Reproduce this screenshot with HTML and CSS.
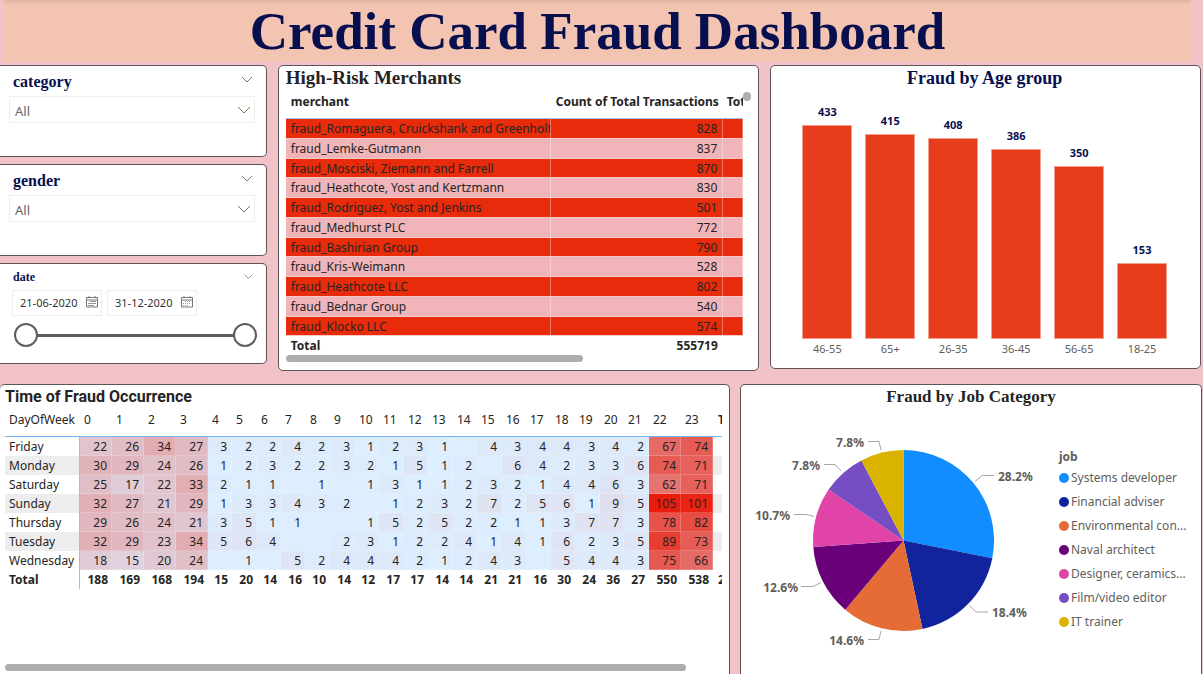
FILE: index.html
```html
<!DOCTYPE html>
<html lang="en">
<head>
<meta charset="utf-8">
<meta name="viewport" content="width=device-width, initial-scale=1">
<title>Credit Card Fraud Dashboard</title>
<link rel="stylesheet" href="styles.css">
</head>
<body>
<header class="banner"><h1>Credit Card Fraud Dashboard</h1></header>
<main class="report">
  <div class="row row-top">
    <div class="slicers">
      <section class="card slicer">
        <div class="slicer-head">
          <label for="category">category</label>
          <button type="button" class="icon-btn" aria-label="Collapse category"><svg class="chev chev-warm" viewBox="0 0 12 8"><path d="M1 1l5 5 5-5"/></svg></button>
        </div>
        <div class="dropdown">
          <select id="category"><option>All</option></select>
          <svg class="dropdown-arrow chev-warm" viewBox="0 0 14 9"><path d="M1 1l6 6 6-6"/></svg>
        </div>
      </section>
      <section class="card slicer">
        <div class="slicer-head">
          <label for="gender">gender</label>
          <button type="button" class="icon-btn" aria-label="Collapse gender"><svg class="chev" viewBox="0 0 12 8"><path d="M1 1l5 5 5-5"/></svg></button>
        </div>
        <div class="dropdown">
          <select id="gender"><option>All</option></select>
          <svg class="dropdown-arrow" viewBox="0 0 14 9"><path d="M1 1l6 6 6-6"/></svg>
        </div>
      </section>
      <section class="card slicer slicer-date">
        <div class="slicer-head">
          <h2>date</h2>
          <button type="button" class="icon-btn" aria-label="Collapse date"><svg class="chev chev-small" viewBox="0 0 12 8"><path d="M1 1l5 5 5-5"/></svg></button>
        </div>
        <div class="dates">
          <div class="date-box">
            <input type="text" aria-label="Start date" value="21-06-2020">
            <svg class="calendar" viewBox="0 0 12 12"><path class="cal-frame" d="M.5 1.500h11v9.500H.5zM.5 4h11M3 0v2M9 0v2"/><path class="cal-days" d="M4 5.500h6M2 7.500h8M2 9.500h6"/></svg>
          </div>
          <div class="date-box">
            <input type="text" aria-label="End date" value="31-12-2020">
            <svg class="calendar" viewBox="0 0 12 12"><path class="cal-frame" d="M.5 1.500h11v9.500H.5zM.5 4h11M3 0v2M9 0v2"/><path class="cal-days" stroke-dasharray="1 1" d="M4 5.500h6M2 7.500h8M2 9.500h6"/></svg>
          </div>
        </div>
        <div class="range">
          <input type="range" aria-label="Range start" min="0" max="100" value="0">
          <input type="range" aria-label="Range end" min="0" max="100" value="100">
        </div>
      </section>
    </div>

    <section class="card merchants">
      <h2>High-Risk Merchants</h2>
      <div class="merchant-scroll">
        <table class="merchant-table">
          <colgroup><col class="m-name"><col class="m-count"><col></colgroup>
          <thead><tr><th scope="col">merchant</th><th scope="col" class="num">Count of Total Transactions</th><th scope="col" class="cut">Total</th></tr></thead>
          <tbody>
            <tr><td>fraud_Romaguera, Cruickshank and Greenholt</td><td class="num">828</td><td></td></tr>
            <tr><td>fraud_Lemke-Gutmann</td><td class="num">837</td><td></td></tr>
            <tr><td>fraud_Mosciski, Ziemann and Farrell</td><td class="num">870</td><td></td></tr>
            <tr><td>fraud_Heathcote, Yost and Kertzmann</td><td class="num">830</td><td></td></tr>
            <tr><td>fraud_Rodriguez, Yost and Jenkins</td><td class="num">501</td><td></td></tr>
            <tr><td>fraud_Medhurst PLC</td><td class="num">772</td><td></td></tr>
            <tr><td>fraud_Bashirian Group</td><td class="num">790</td><td></td></tr>
            <tr><td>fraud_Kris-Weimann</td><td class="num">528</td><td></td></tr>
            <tr><td>fraud_Heathcote LLC</td><td class="num">802</td><td></td></tr>
            <tr><td>fraud_Bednar Group</td><td class="num">540</td><td></td></tr>
            <tr><td>fraud_Klocko LLC</td><td class="num">574</td><td></td></tr>
          </tbody>
          <tfoot><tr><th scope="row">Total</th><td class="num">555719</td><td></td></tr></tfoot>
        </table>
        <span class="scroll-dot"></span>
      </div>
      <div class="hbar hbar-merchants"></div>
    </section>

    <section class="card age">
      <h2>Fraud by Age group</h2>
      <div class="bars">
        <div class="bar-col"><span class="bar-value">433</span><div class="bar" style="height:214px"></div><span class="bar-label">46-55</span></div>
        <div class="bar-col"><span class="bar-value">415</span><div class="bar" style="height:205px"></div><span class="bar-label">65+</span></div>
        <div class="bar-col"><span class="bar-value">408</span><div class="bar" style="height:201px"></div><span class="bar-label">26-35</span></div>
        <div class="bar-col"><span class="bar-value">386</span><div class="bar" style="height:190px"></div><span class="bar-label">36-45</span></div>
        <div class="bar-col"><span class="bar-value">350</span><div class="bar" style="height:173px"></div><span class="bar-label">56-65</span></div>
        <div class="bar-col"><span class="bar-value">153</span><div class="bar" style="height:76px"></div><span class="bar-label">18-25</span></div>
      </div>
    </section>
  </div>

  <div class="row row-bottom">
    <section class="card times">
      <h2>Time of Fraud Occurrence</h2>
      <table class="heat">
        <colgroup id="heat-cols"></colgroup>
        <thead><tr id="heat-head"></tr></thead>
        <tbody id="heat-body"></tbody>
        <tfoot><tr id="heat-foot"></tr></tfoot>
      </table>
      <div class="hbar hbar-times"></div>
    </section>

    <section class="card jobs">
      <h2>Fraud by Job Category</h2>
      <div class="jobs-body">
        <svg class="pie" viewBox="1 25 310 266" role="img" aria-label="Share of fraud by job">
          <path fill="#118dff" d="M163.500 156.500V66A90.500 90.500 0 0 1 252.300 174.200z"/>
          <path fill="#12239e" d="M163.500 156.500L252.300 174.200A90.500 90.500 0 0 1 182.500 245z"/>
          <path fill="#e66c37" d="M163.500 156.500L182.500 245A90.500 90.500 0 0 1 105.200 225.700z"/>
          <path fill="#6b007b" d="M163.500 156.500L105.200 225.700A90.500 90.500 0 0 1 73.300 162.900z"/>
          <path fill="#e044a7" d="M163.500 156.500L73.300 162.900A90.500 90.500 0 0 1 88.600 105.600z"/>
          <path fill="#744ec2" d="M163.500 156.500L88.600 105.600A90.500 90.500 0 0 1 121.400 76.400z"/>
          <path fill="#d9b300" d="M163.500 156.500L121.400 76.400A90.500 90.500 0 0 1 163.500 66z"/>
          <path class="leader" d="M235 97.500l7-6h12M229 221l7 7h12M141 247l-2 8.500h-11M81 198.500l-8 4H61M74 132.500l-8-2H54M101 87l-6-6.500H84M141 66l-2-8.500h-11"/>
          <g class="pie-text">
            <text x="258" y="97">28.2%</text>
            <text x="252" y="233">18.4%</text>
            <text x="124" y="261" text-anchor="end">14.6%</text>
            <text x="58" y="208" text-anchor="end">12.6%</text>
            <text x="50" y="136" text-anchor="end">10.7%</text>
            <text x="80" y="86" text-anchor="end">7.8%</text>
            <text x="124" y="63" text-anchor="end">7.8%</text>
          </g>
        </svg>
        <div class="legend">
          <h3>job</h3>
          <ul>
            <li class="c1">Systems developer</li>
            <li class="c2">Financial adviser</li>
            <li class="c3">Environmental con...</li>
            <li class="c4">Naval architect</li>
            <li class="c5">Designer, ceramics...</li>
            <li class="c6">Film/video editor</li>
            <li class="c7">IT trainer</li>
          </ul>
        </div>
      </div>
    </section>
  </div>
</main>
<script src="heat.js"></script>
</body>
</html>
```
FILE: styles.css
```css
* { box-sizing: border-box; }

body {
  margin: 0;
  height: 100vh;
  display: flex;
  flex-direction: column;
  overflow: hidden;
  background: #f1c2c7;
  color: #252423;
  font-family: "Noto Sans", "Open Sans", sans-serif;
  font-size: 12px;
  line-height: 16px;
}

h1, h2, h3, ul { margin: 0; padding: 0; }

.banner {
  margin: 0 12px 0 4px;
  background: linear-gradient(#dfb3a3, #f3c4b2 5px);
  text-align: center;
}

.banner h1 {
  color: #070f4f;
  font: bold 53px/62px "Liberation Serif", serif;
}

.report {
  flex: 1;
  display: flex;
  flex-direction: column;
  gap: 13px;
  padding-top: 3px;
}

.row { display: grid; column-gap: 11px; }

.row-top {
  grid-template-columns: 267fr 482fr 431fr;
  align-items: start;
  padding-right: 2px;
}

.row-bottom {
  flex: 1;
  grid-template-columns: 730fr 462fr;
  column-gap: 10px;
  padding-right: 1px;
}

.card {
  min-width: 0;
  background: #fff;
  border: 1px solid #5e5355;
  border-radius: 5px;
}

.card h2 { font: bold 18px/24px "Liberation Serif", serif; }

/* Slicers */
.slicers { display: grid; gap: 7px; }

.slicer {
  min-height: 92px;
  padding: 6px 11px 0 9px;
  border-left: 0;
  border-radius: 0 5px 5px 0;
}

.slicer-head {
  display: flex;
  justify-content: space-between;
  padding: 0 0 0 4px;
}

.slicer-head label {
  color: #070f4f;
  font: bold 16px/20px "Liberation Serif", serif;
}

.slicer-head h2 {
  color: #070f4f;
  font: bold 12px/14px "Liberation Serif", serif;
}

.icon-btn {
  display: flex;
  padding: 4px 2px;
  border: 0;
  background: none;
}

svg { fill: none; stroke: #777; }
.chev { width: 12px; height: 8px; }
.chev-small { width: 9px; height: 6px; }
.chev-warm { stroke: #8a7250; }

.dropdown { position: relative; margin-top: 4px; }

.dropdown select {
  display: block;
  width: 100%;
  height: 27px;
  padding: 2px 5px 0;
  border: 1px solid #eee;
  border-radius: 0;
  background: #fff;
  color: #666;
  appearance: none;
  font: 13px/18px "Noto Sans", sans-serif;
}

.dropdown-arrow {
  position: absolute;
  top: 10px;
  right: 4px;
  width: 14px;
  height: 9px;
  pointer-events: none;
}

.slicer-date { min-height: 101px; }
.dates { display: flex; gap: 5px; padding: 6px 0 0 3px; }

.date-box {
  display: flex;
  align-items: center;
  width: 90px;
  height: 26px;
  padding: 0 3px 0 7px;
  border: 1px solid #eee;
}

.date-box input {
  flex: 1;
  min-width: 0;
  padding: 0;
  border: 0;
  background: none;
  color: #333;
  font: 11px/16px "Noto Sans", sans-serif;
}

.calendar { width: 12px; height: 12px; margin-bottom: 3px; }
.cal-frame { stroke: #777; }
.cal-days { stroke: #999; }

.range { display: grid; margin: 7px -2px 0 5px; }

.range input {
  grid-area: 1 / 1;
  width: 100%;
  height: 24px;
  margin: 0;
  background: none;
  appearance: none;
  pointer-events: none;
}

.range input:first-child::-webkit-slider-runnable-track {
  background: linear-gradient(#605e5c, #605e5c) center / 100% 3px no-repeat;
}

.range input::-webkit-slider-thumb {
  width: 24px;
  height: 24px;
  border: 2px solid #605e5c;
  border-radius: 50%;
  background: #fff;
  appearance: none;
  pointer-events: auto;
}

/* Merchant table */
.merchants { padding: 0 15px 8px 7px; }
.merchants h2 { font-size: 19px; }

.merchant-scroll { position: relative; }

table { width: 100%; border-collapse: collapse; table-layout: fixed; }
th, td { padding: 0 5px; overflow: hidden; white-space: nowrap; }
th { text-align: left; }
.num { text-align: right; }

.m-name { width: 265px; }
.m-count { width: 172px; }
.merchant-table thead th { height: 28px; padding-bottom: 4px; border-bottom: 1px solid #9cc4ea; }
.merchant-table thead .cut { padding: 0 0 4px 4px; }
.merchant-table tbody { border-bottom: 1px solid #9cc4ea; }
.merchant-table tbody td {
  height: 20px;
  padding-top: 1px;
  border-right: 1px solid #ec7a63;
  border-bottom: 1px solid #f3c9c8;
  background: #e82c0b;
  line-height: 17px;
}
.merchant-table tbody td:first-child { padding-right: 0; }
.merchant-table tbody tr:nth-child(4n+3) td { height: 19px; }
.merchant-table tbody tr:nth-child(even) td { border-right-color: #f6cdcf; background: #f0b4b9; }
.merchant-table tfoot { font-weight: bold; }
.merchant-table tfoot th, .merchant-table tfoot td { padding-top: 2px; }

.scroll-dot {
  position: absolute;
  top: 2px;
  right: -8px;
  width: 8px;
  height: 9px;
  border-radius: 4px;
  background: #adadad;
}

.hbar { height: 7px; border-radius: 4px; background: #adadad; }
.hbar-merchants { width: 65%; margin-top: 1px; }

/* Age chart */
.age { padding: 0 33px 11px 31px; text-align: center; }
.age h2 { color: #070f4f; }

.bars { display: flex; align-items: flex-end; gap: 13px; min-height: 267px; }
.bar-col { flex: 1; display: flex; flex-direction: column; }
.bar-value { color: #070f4f; font-size: 11px; font-weight: bold; margin-bottom: 5px; }
.bar { border: 1px solid #f3a08f; background: #e83d1c; }
.bar-label { margin-top: 2px; color: #605e5c; font-size: 11px; }

/* Heat map */
.times {
  display: flex;
  flex-direction: column;
  padding: 0 7px 4px 5px;
  border-left: 0;
  border-bottom: 0;
  border-radius: 5px 5px 0 0;
}

.times h2 { font: bold 16px/24px Roboto, sans-serif; }

.heat { border-collapse: separate; border-spacing: 0; }
.w-day { width: 75px; }
.w-wide { width: 32px; }
.w-a { width: 24px; }
.w-b { width: 25px; }

.heat thead th { height: 28px; padding: 0 0 4px 4px; border-bottom: 1px solid #72b5f5; font-weight: normal; }
.heat td, .heat tfoot th { height: 19px; padding: 0 4px 0 0; line-height: 17px; text-align: right; }
.heat tbody th { padding: 0 0 0 4px; border-right: 1px solid #8fc3f3; font-weight: normal; }
.heat tbody td, .heat tbody th { padding-top: 1px; }
.heat tbody td { border-right: 1px solid rgba(255, 255, 255, .2); border-bottom: 1px solid rgba(255, 255, 255, .2); }
.heat tbody tr:nth-child(even) { background: #ededed; }
.heat tfoot th { padding-left: 4px; border-right: 1px solid #8fc3f3; text-align: left; }
.heat tfoot td { font-weight: bold; }
.heat tfoot td, .heat tfoot th { overflow: visible; }
.heat tr > .edge { padding: 0 0 0 5px; border: 0; overflow: hidden; text-align: left; font-weight: bold; }
.heat thead tr > .edge { padding-bottom: 4px; border-bottom: 1px solid #72b5f5; }

.hbar-times { width: 95%; margin-top: auto; }

/* Job chart */
.jobs { border-bottom: 0; border-radius: 5px 5px 0 0; }
.jobs h2 { font-size: 17px; text-align: center; }
.jobs-body { display: flex; }
.pie { flex: none; width: 310px; height: 266px; stroke: none; }
.leader { stroke: #a6a6a6; }
.pie-text { fill: #605e5c; font-size: 12px; font-weight: bold; }

.legend { padding: 39px 0 0 8px; color: #605e5c; white-space: nowrap; }
.legend h3 { font-size: 12px; line-height: 18px; }
.legend ul { list-style: none; }
.legend li { display: flex; align-items: center; gap: 2px; height: 24px; }
.legend li::before { content: ""; width: 10px; height: 10px; border-radius: 50%; background: var(--dot); }
.c1 { --dot: #118dff; }
.c2 { --dot: #12239e; }
.c3 { --dot: #e66c37; }
.c4 { --dot: #6b007b; }
.c5 { --dot: #e044a7; }
.c6 { --dot: #744ec2; }
.c7 { --dot: #d9b300; }
```
FILE: heat.js
```js
// Fraud counts per weekday, one entry per hour (0-23); 0 is drawn as blank.
const days = {
  Friday:    [22,26,34,27,3,2,2,4,2,3,1,2,3,1,0,4,3,4,4,3,4,2,67,74],
  Monday:    [30,29,24,26,1,2,3,2,2,3,2,1,5,1,2,0,6,4,2,3,3,6,74,71],
  Saturday:  [25,17,22,33,2,1,1,0,1,0,1,3,1,1,2,3,2,1,4,4,6,3,62,71],
  Sunday:    [32,27,21,29,1,3,3,4,3,2,0,1,2,3,2,7,2,5,6,1,9,5,105,101],
  Thursday:  [29,26,24,21,3,5,1,1,0,0,1,5,2,5,2,2,1,1,3,7,7,3,78,82],
  Tuesday:   [32,29,23,34,5,6,4,0,0,2,3,1,2,2,4,1,4,1,6,2,3,5,89,73],
  Wednesday: [18,15,20,24,0,1,0,5,2,4,4,4,2,1,2,4,3,0,5,4,4,3,75,66]
};
const totals = [188,169,168,194,15,20,14,16,10,14,12,17,17,14,14,21,21,16,30,24,36,27,550,538];
const low = [221, 238, 255];
const high = [234, 29, 12];

const shade = v => {
  const t = Math.max(v - 1, 0) / 104;
  return "rgb(" + low.map((c, i) => Math.round(c + (high[i] - c) * t)).join(",") + ")";
};
const width = h => (h < 4 || h > 21) ? "w-wide" : h % 2 ? "w-b" : "w-a";
const fill = (id, html) => { document.getElementById(id).innerHTML = html; };

fill("heat-cols", '<col class="w-day">' + totals.map((t, h) => `<col class="${width(h)}">`).join("") + "<col>");
fill("heat-head", '<th scope="col">DayOfWeek</th>' + totals.map((t, h) => `<th scope="col">${h}</th>`).join("") + '<th scope="col" class="edge">Total</th>');
fill("heat-body", Object.entries(days).map(([day, row]) =>
  `<tr><th scope="row">${day}</th>` + row.map(v => `<td style="background:${shade(v)}">${v || ""}</td>`).join("") + '<td class="edge"></td></tr>').join(""));
fill("heat-foot", '<th scope="row">Total</th>' + totals.map(t => `<td>${t}</td>`).join("") + '<td class="edge">2145</td>');
```
